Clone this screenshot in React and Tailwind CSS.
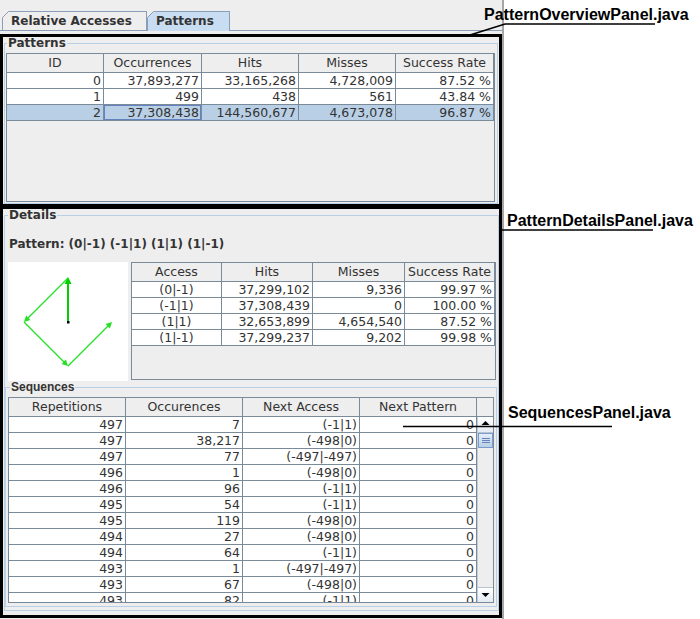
import React from 'react'

const patternRows = [
  ['0', '37,893,277', '33,165,268', '4,728,009', '87.52 %'],
  ['1', '499', '438', '561', '43.84 %'],
  ['2', '37,308,438', '144,560,677', '4,673,078', '96.87 %'],
]

const accessRows = [
  ['(0|-1)', '37,299,102', '9,336', '99.97 %'],
  ['(-1|1)', '37,308,439', '0', '100.00 %'],
  ['(1|1)', '32,653,899', '4,654,540', '87.52 %'],
  ['(1|-1)', '37,299,237', '9,202', '99.98 %'],
]

const sequenceRows = [
  ['497', '7', '(-1|1)', '0'],
  ['497', '38,217', '(-498|0)', '0'],
  ['497', '77', '(-497|-497)', '0'],
  ['496', '1', '(-498|0)', '0'],
  ['496', '96', '(-1|1)', '0'],
  ['495', '54', '(-1|1)', '0'],
  ['495', '119', '(-498|0)', '0'],
  ['494', '27', '(-498|0)', '0'],
  ['494', '64', '(-1|1)', '0'],
  ['493', '1', '(-497|-497)', '0'],
  ['493', '67', '(-498|0)', '0'],
  ['493', '82', '(-1|1)', '0'],
]

function Head({ w, children }) {
  return (
    <div className={`${w} h-[19px] shrink-0 border-r border-b border-[#7a8a99] bg-[#eeeeee] text-center text-[12.5px] leading-[18px] whitespace-nowrap overflow-hidden`}>
      {children}
    </div>
  )
}

function Cell({ w, center, sel, focus, children }) {
  return (
    <div
      className={`${w} h-[16px] shrink-0 border-r border-b border-[#7a8a99] px-[2px] text-[12.5px] leading-[15px] whitespace-nowrap overflow-hidden ${center ? 'text-center' : 'text-right'} ${sel ? 'bg-[#b8cfe5]' : 'bg-white'} ${focus ? 'shadow-[inset_0_0_0_1px_#6382bf]' : ''}`}
    >
      {children}
    </div>
  )
}

function Rows({ widths, rows, centerCol = -1, selected = -1, focus = -1 }) {
  return rows.map((r, ri) => (
    <div key={ri} className="flex">
      {r.map((v, ci) => (
        <Cell
          key={ci}
          w={widths[ci]}
          center={ci === centerCol}
          sel={ri === selected}
          focus={ri === selected && ci === focus}
        >
          {v}
        </Cell>
      ))}
    </div>
  ))
}

function Tab({ label, selected, w }) {
  return (
    <div
      className={`relative ${w} border-t border-x border-[#8b9eb8] pl-[8px] pt-[1px] font-bold leading-[17px] whitespace-nowrap ${selected ? 'h-[20px] -mb-px z-10 bg-[#c8ddf2]' : 'h-[19px] bg-[#eeeeee]'}`}
    >
      <svg className="absolute -left-px -top-px" width="7" height="7">
        <polygon points="0,0 7,0 0,7" fill="#eeeeee" />
        <line x1="0.5" y1="6.5" x2="6.5" y2="0.5" stroke="#8b9eb8" />
      </svg>
      {label}
    </div>
  )
}

function PatternDrawing() {
  const g = '#22e022'
  return (
    <svg width="120" height="119" className="block">
      <line x1="60" y1="60" x2="60" y2="21" stroke="#00d000" strokeWidth="2" />
      <polygon points="60,15 56.5,22 63.5,22" fill="#00d000" />
      <line x1="60" y1="16" x2="20" y2="56" stroke={g} strokeWidth="1.2" />
      <polygon points="16,60 22.4,57.9 18.1,53.6" fill={g} />
      <line x1="16" y1="60" x2="56" y2="100" stroke={g} strokeWidth="1.2" />
      <polygon points="60,104 53.6,101.9 57.9,97.6" fill={g} />
      <line x1="60" y1="104" x2="100" y2="64" stroke={g} strokeWidth="1.2" />
      <polygon points="104,60 101.9,66.4 97.6,62.1" fill={g} />
      <rect x="59" y="59" width="2.5" height="2.5" fill="#000" />
    </svg>
  )
}

function ScrollBar() {
  return (
    <div className="w-[16px] h-full flex flex-col bg-[#eeeeee] border-l border-[#c4ccd6]">
      <div className="h-[16px] border-b border-[#b8c4d2] bg-linear-to-b from-[#ffffff] to-[#e4ebf3]">
        <svg width="15" height="15" className="block">
          <polygon points="3.5,8 11.5,8 7.5,4" fill="#000" />
        </svg>
      </div>
      <div className="h-[15px] border border-[#7a9ccc] bg-linear-to-b from-[#e6eef8] to-[#b8cfe5] flex items-center justify-center">
        <svg width="8" height="7" className="block">
          <path d="M0 1.5H8M0 3.5H8M0 5.5H8" stroke="#6382bf" />
        </svg>
      </div>
      <div className="flex-1" />
      <div className="h-[15px] border-t border-[#b8c4d2] bg-linear-to-b from-[#ffffff] to-[#e4ebf3]">
        <svg width="15" height="14" className="block">
          <polygon points="3.5,5 11.5,5 7.5,9" fill="#000" />
        </svg>
      </div>
    </div>
  )
}

function Annotations() {
  return (
    <>
      <svg className="absolute inset-0 pointer-events-none" width="700" height="619">
        <polyline points="470,35 505,24 655,24" fill="none" stroke="#000" strokeWidth="1.6" />
        <line x1="502" y1="230" x2="653" y2="230" stroke="#000" strokeWidth="1.6" />
        <line x1="403" y1="426.5" x2="612" y2="426.5" stroke="#000" strokeWidth="1.6" />
      </svg>
      <div className="absolute left-[484px] top-[6px] font-['Liberation_Sans',Arial,sans-serif] font-bold text-[16px] leading-[18px] text-black">
        PatternOverviewPanel.java
      </div>
      <div className="absolute left-[507px] top-[212px] font-['Liberation_Sans',Arial,sans-serif] font-bold text-[16px] leading-[18px] text-black">
        PatternDetailsPanel.java
      </div>
      <div className="absolute left-[508px] top-[404px] font-['Liberation_Sans',Arial,sans-serif] font-bold text-[16px] leading-[18px] text-black">
        SequencesPanel.java
      </div>
    </>
  )
}

export default function App() {
  const pw = ['w-[97px]', 'w-[98px]', 'w-[97px]', 'w-[97px]', 'w-[98px]']
  const dw = ['w-[90px]', 'w-[91px]', 'w-[92px]', 'w-[90px]']
  const sw = ['w-[117px]', 'w-[117px]', 'w-[117px]', 'w-[117px]']

  return (
    <div className="relative w-[700px] h-[619px] bg-white overflow-hidden flex">
      <div className="w-[504px] h-full shrink-0 bg-[#eeeeee] border-r-2 border-[#a6a6a6] flex flex-col font-['DejaVu_Sans',sans-serif] text-[12px] text-[#333333]">
        {/* tabs */}
        <div className="h-[31px] shrink-0 flex items-end pl-[2px] border-b border-[#8b9eb8]">
          <Tab label="Relative Accesses" w="w-[145px]" />
          <Tab label="Patterns" w="w-[83px]" selected />
        </div>
        <div className="h-[3px] shrink-0" />

        {/* Patterns overview */}
        <div className="h-[172px] shrink-0 border-x-[3px] border-t-[3px] border-b-2 border-black">
          <fieldset className="mx-[1px] h-[167px] border border-[#b8cfe5]">
            <legend className="ml-[2px] px-[1px] font-bold leading-[12px]">Patterns</legend>
            <div className="pt-[4px] pl-[1px]">
              <div className="w-[489px] h-[149px] border border-[#7a8a99] bg-[#eeeeee] overflow-hidden">
                <div className="flex">
                  {['ID', 'Occurrences', 'Hits', 'Misses', 'Success Rate'].map((h, i) => (
                    <Head key={h} w={pw[i]}>{h}</Head>
                  ))}
                </div>
                <Rows widths={pw} rows={patternRows} selected={2} focus={1} />
              </div>
            </div>
          </fieldset>
        </div>

        {/* Details */}
        <div className="h-[412px] shrink-0 border-[3px] border-black">
          <fieldset className="ml-[1px] h-[402px] border border-[#b8cfe5]">
            <legend className="ml-[3px] px-[1px] font-bold leading-[12px]">Details</legend>
            <div className="mt-[16px] pl-[4px] font-bold leading-[14px] whitespace-nowrap">
              Pattern: (0|-1) (-1|1) (1|1) (1|-1)
            </div>
            <div className="mt-[11px] h-[119px] flex items-start gap-[3px] pl-[3px]">
              <div className="w-[120px] h-[119px] bg-white">
                <PatternDrawing />
              </div>
              <div className="w-[365px] h-[118px] border border-[#7a8a99] bg-[#eeeeee] overflow-hidden">
                <div className="flex">
                  {['Access', 'Hits', 'Misses', 'Success Rate'].map((h, i) => (
                    <Head key={h} w={dw[i]}>{h}</Head>
                  ))}
                </div>
                <Rows widths={dw} rows={accessRows} centerCol={0} />
              </div>
            </div>

            <fieldset className="w-[492px] h-[226px] border border-[#b8cfe5]">
              <legend className="ml-[4px] px-[1px] font-['Liberation_Sans',Arial,sans-serif] font-bold leading-[12px]">
                Sequences
              </legend>
              <div className="pt-[4px] pl-[2px]">
                <div className="w-[486px] h-[206px] border border-[#7a8a99] bg-[#eeeeee] overflow-hidden">
                  <div className="flex">
                    {['Repetitions', 'Occurences', 'Next Access', 'Next Pattern'].map((h, i) => (
                      <Head key={h} w={sw[i]}>{h}</Head>
                    ))}
                    <div className="w-[16px] h-[19px] shrink-0 border-b border-[#7a8a99] bg-[#eeeeee]" />
                  </div>
                  <div className="flex h-[185px]">
                    <div className="w-[468px] h-full overflow-hidden">
                      <Rows widths={sw} rows={sequenceRows} />
                    </div>
                    <ScrollBar />
                  </div>
                </div>
              </div>
            </fieldset>
          </fieldset>
        </div>
      </div>
      <Annotations />
    </div>
  )
}
